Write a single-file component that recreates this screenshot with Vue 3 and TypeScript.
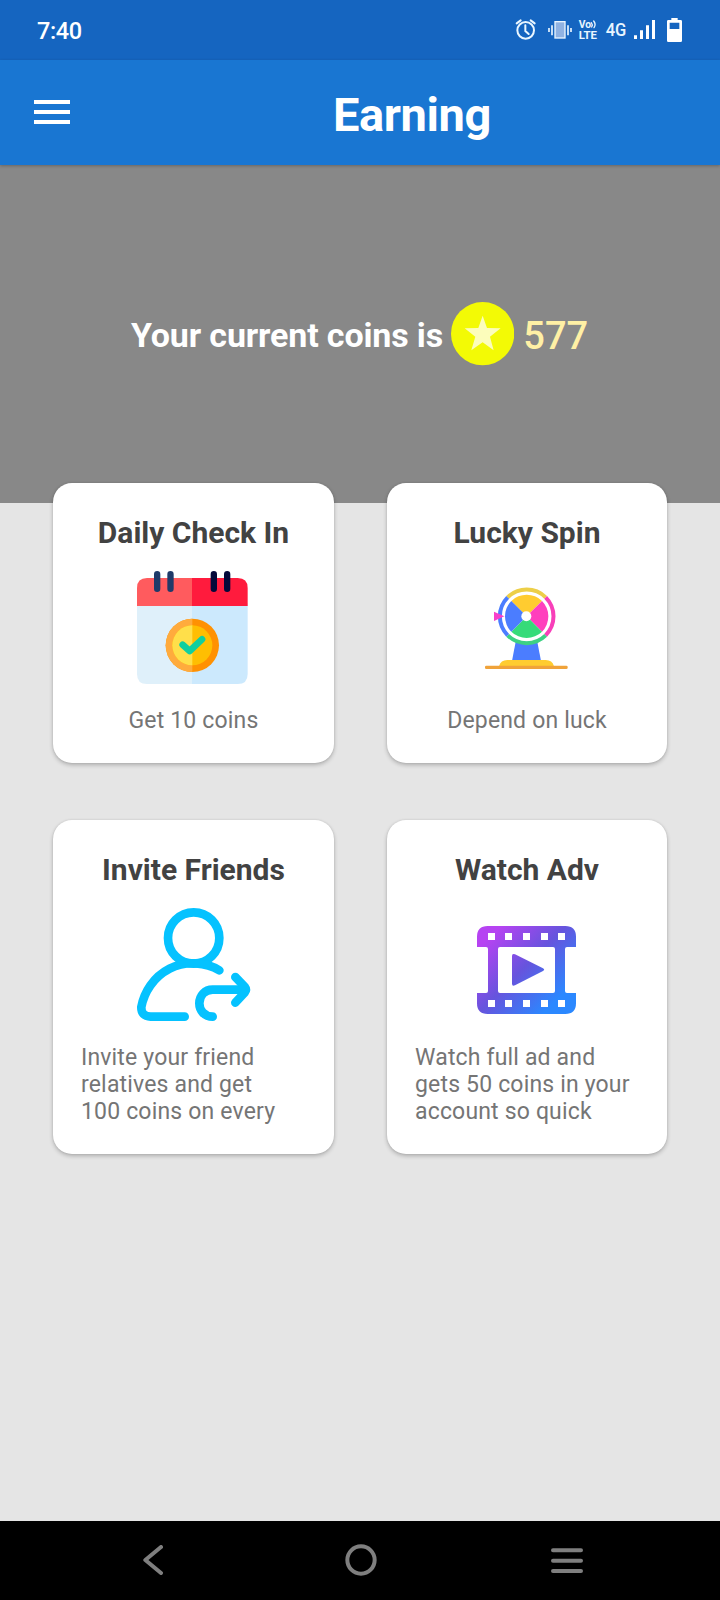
<script setup lang="ts">
interface Offer {
  id: 'checkin' | 'spin' | 'invite' | 'watch'
  title: string
  lines: string[]
}

const time = '7:40'
const coins = 577

const offers: Offer[] = [
  { id: 'checkin', title: 'Daily Check In', lines: ['Get 10 coins'] },
  { id: 'spin', title: 'Lucky Spin', lines: ['Depend on luck'] },
  { id: 'invite', title: 'Invite Friends', lines: ['Invite your friend', 'relatives and get', '100 coins on every'] },
  { id: 'watch', title: 'Watch Adv', lines: ['Watch full ad and', 'gets 50 coins in your', 'account so quick'] },
]
</script>

<template>
  <div class="screen">
    <div class="status">
      <span class="time">{{ time }}</span>
      <svg class="status-icons" viewBox="0 0 600 180">
        <g fill="none" stroke="#e9f6ff" stroke-width="6" stroke-linecap="round">
          <circle cx="77" cy="91" r="25" />
          <path d="M76 76V93L86 102M50 70L62 61M92 61L104 70" />
          <path d="M147 84V96M156 76V106M204 76V106M213 84V96" stroke-width="5" stroke-linecap="butt" />
          <rect x="165" y="65" width="30" height="49" fill="#8fb2e2" stroke-width="4" />
          <path d="M274 68Q279 74 275 81M281 63Q289 73 282 83" stroke-width="4" />
        </g>
        <g fill="#e9f6ff">
          <text x="236" y="85" class="volte" textLength="37" lengthAdjust="spacingAndGlyphs">Vo</text>
          <text x="236" y="117" class="volte" textLength="55" lengthAdjust="spacingAndGlyphs">LTE</text>
          <text x="317" y="109" class="net" textLength="62" lengthAdjust="spacingAndGlyphs">4G</text>
        </g>
        <path fill="#fff" d="M402 106h9v11h-9zM420 91h9v26h-9zM438 76h9v41h-9zM456 60h9v57h-9z" />
        <path
          fill="#fff"
          fill-rule="evenodd"
          d="M514 54h19v6h9q4 0 4 4v58q0 4-4 4h-37q-4 0-4-4V64q0-4 4-4h9zM509 68v19h29V68z"
        />
      </svg>
    </div>

    <header class="appbar">
      <svg class="menu" viewBox="0 0 108 72">
        <path fill="#fff" d="M0 0h108v12H0zM0 30h108v12H0zM0 60h108v12H0z" />
      </svg>
      <h1>Earning</h1>
    </header>

    <section class="hero">
      <span class="label">Your current coins is</span>
      <svg class="coin" viewBox="0 0 190 190">
        <circle cx="95" cy="95" r="95" fill="#f3fa05" />
        <path
          fill="#fcfdbb"
          d="M95 41L108 78L149 79L117 104L128 145L95 121L61 145L73 104L41 79L82 78Z"
        />
      </svg>
      <span class="amount">{{ coins }}</span>
    </section>

    <main class="grid">
      <article v-for="o in offers" :key="o.id" class="card">
        <h2>{{ o.title }}</h2>

        <svg v-if="o.id === 'checkin'" class="icon" viewBox="282 294 360 360">
          <path fill="#dff0fa" d="M291 400H457V642H321Q291 642 291 612Z" />
          <path fill="#cce9fd" d="M456 400H623V612Q623 642 593 642H456Z" />
          <path fill="#ff5b5e" d="M291 408V354Q291 324 321 324H457V408Z" />
          <path fill="#ff1b3d" d="M456 324H593Q623 324 623 354V408H456Z" />
          <g stroke-width="19" stroke-linecap="round">
            <path stroke="#1f3a69" d="M351.500 312.500V356.500M391.500 312.500V356.500" />
            <path stroke="#04093a" d="M521.500 312.500V356.500M561.500 312.500V356.500" />
          </g>
          <circle cx="457" cy="526" r="80" fill="#ff9102" />
          <path fill="#ffab3d" d="M457 446A80 80 0 0 0 457 606Z" />
          <circle cx="457" cy="526" r="60" fill="#ffbe02" />
          <path fill="#ffdf4a" d="M457 466A60 60 0 0 0 457 586Z" />
          <path
            d="M428 524L449 543L486 508"
            fill="none"
            stroke="#10cfa0"
            stroke-width="20"
            stroke-linecap="round"
            stroke-linejoin="round"
          />
        </svg>

        <svg v-else-if="o.id === 'spin'" class="icon" viewBox="291 294 360 360">
          <path fill="#4b7dff" d="M437 515H502L513 573H426Z" />
          <path fill="#ffcc30" d="M387 589Q392 570 412 570H527Q547 570 552 589Z" />
          <rect x="345" y="587" width="248" height="10" rx="4" fill="#f0a33a" />
          <g fill="none" stroke-width="12">
            <path stroke="#edcf48" d="M413 382A81 81 0 0 1 527 382" />
            <path stroke="#f83fb9" d="M527 382A81 81 0 0 1 527 496" />
            <path stroke="#3dd183" d="M527 496A81 81 0 0 1 413 496" />
            <path stroke="#4b7dff" d="M413 496A81 81 0 0 1 413 382" />
          </g>
          <path fill="#ffcc30" d="M470 439L424 393A65 65 0 0 1 516 393Z" />
          <path fill="#ff3fbd" d="M470 439L516 393A65 65 0 0 1 516 485Z" />
          <path fill="#36db79" d="M470 439L516 485A65 65 0 0 1 424 485Z" />
          <path fill="#4b7dff" d="M470 439L424 485A65 65 0 0 1 424 393Z" />
          <circle cx="469" cy="439" r="15" fill="#fff" />
          <path fill="#f83fca" d="M372 425L403 439L372 453Z" />
        </svg>

        <svg v-else-if="o.id === 'invite'" class="icon" viewBox="282 285 360 360">
          <g fill="none" stroke="#05c2ff" stroke-width="26" stroke-linecap="round" stroke-linejoin="round">
            <circle cx="461" cy="384" r="77" />
            <path d="M538 481C500 458 440 450 389 476C340 501 312 547 304 591Q303 619 332 620H434" />
            <path d="M518 620C492 620 478 600 478 580C478 557 494 539 518 539H612" />
            <path d="M586 501L614 530Q621 539 614 548L586 578" />
          </g>
        </svg>

        <svg v-else class="icon" viewBox="291 285 360 360">
          <defs>
            <linearGradient id="film" gradientUnits="userSpaceOnUse" x1="365" y1="375" x2="560" y2="570">
              <stop offset="0" stop-color="#b643f2" />
              <stop offset=".5" stop-color="#6654dd" />
              <stop offset="1" stop-color="#2b88ff" />
            </linearGradient>
          </defs>
          <path
            fill="url(#film)"
            fill-rule="evenodd"
            d="M321 411V380Q321 348 353 348H586Q618 348 618 380V411H591Q585 411 585 417V543Q585 549 591 549H618V580Q618 612 586 612H353Q321 612 321 580V549H348Q354 549 354 543V417Q354 411 348 411ZM390 411Q384 411 384 417V543Q384 549 390 549H549Q555 549 555 543V417Q555 411 549 411Z"
          />
          <path fill="url(#film)" d="M426 438Q426 429 435 433L519 475Q526 479 519 483L435 526Q426 530 426 521Z" />
          <path
            fill="#fff"
            d="M354 369h21v21h-21zM405 369h21v21h-21zM459 369h21v21h-21zM513 369h21v21h-21zM564 369h21v21h-21zM354 570h21v21h-21zM405 570h21v21h-21zM459 570h21v21h-21zM513 570h21v21h-21zM564 570h21v21h-21z"
          />
        </svg>

        <p :class="{ wide: o.lines.length > 1 }">
          <span v-for="line in o.lines" :key="line">{{ line }}</span>
        </p>
      </article>
    </main>

    <nav class="navbar">
      <svg viewBox="0 0 60 90"><path d="M54 6L7 45L54 84" /></svg>
      <svg viewBox="0 0 96 96"><circle cx="48" cy="48" r="41" /></svg>
      <svg viewBox="0 0 96 78"><path d="M6 7H90M6 38H90M6 69H90" /></svg>
    </nav>
  </div>
</template>

<style>
body {
  margin: 0;
  background: #e5e5e5;
}
</style>

<style scoped>
.screen {
  display: flex;
  flex-direction: column;
  width: 720px;
  height: 1600px;
  overflow: hidden;
  background: #e5e5e5;
  font-family: Roboto, "Liberation Sans", sans-serif;
}

svg {
  display: block;
  flex: none;
}

h1,
h2,
p {
  margin: 0;
}

.status {
  display: flex;
  justify-content: space-between;
  height: 60px;
  padding: 0 20px 0 37px;
  background: #1565c0;
  color: #fff;
}

.time {
  font-size: 23.500px;
  font-weight: 500;
  line-height: 62px;
  letter-spacing: -0.4px;
}

.status-icons {
  width: 200px;
  height: 60px;
}

.volte {
  font-size: 31px;
  font-weight: 700;
}

.net {
  font-size: 55px;
  font-weight: 500;
}

.appbar {
  position: relative;
  display: flex;
  align-items: center;
  height: 105px;
  padding-left: 34px;
  background: #1976d2;
  box-shadow: 0 1px 3px rgba(0, 0, 0, 0.25);
}

.menu {
  width: 36px;
  height: 24px;
  margin-bottom: 2px;
}

h1 {
  margin-left: 263px;
  padding-top: 4px;
  color: #fff;
  font-size: 47px;
  font-weight: 700;
  letter-spacing: -0.4px;
}

.hero {
  display: flex;
  align-items: center;
  height: 338px;
  padding-left: 131px;
  background: #888;
}

.label {
  width: 320px;
  padding-top: 2px;
  color: #fff;
  font-size: 34px;
  font-weight: 700;
  letter-spacing: -0.150px;
  white-space: nowrap;
}

.coin {
  width: 63.300px;
  height: 63.300px;
}

.amount {
  margin-left: 9px;
  padding-top: 4px;
  color: #fff0a5;
  font-size: 38px;
  font-weight: 500;
}

.grid {
  position: relative;
  display: grid;
  grid-template-columns: 281px 280px;
  column-gap: 53px;
  row-gap: 57px;
  margin: -20px 0 0 53px;
}

.card {
  display: flex;
  flex-direction: column;
  align-items: center;
  padding: 32px 0 29px;
  border-radius: 19px;
  background: #fff;
  box-shadow: 0 2px 4px rgba(0, 0, 0, 0.24), 0 0 2px rgba(0, 0, 0, 0.1);
}

h2 {
  color: #424242;
  font-size: 30px;
  font-weight: 700;
  line-height: 36px;
}

.icon {
  width: 120px;
  height: 120px;
  margin: 17px 0 19px;
}

p {
  color: #757575;
  font-size: 23px;
  line-height: 27px;
  letter-spacing: 0.170px;
}

p.wide {
  align-self: stretch;
  padding-left: 28px;
}

p span {
  display: block;
  white-space: nowrap;
}

.navbar {
  display: flex;
  align-items: center;
  height: 79px;
  margin-top: auto;
  padding: 0 0 1px 143px;
  box-sizing: border-box;
  background: #000;
}

.navbar svg {
  fill: none;
  stroke: #7f7f7f;
  stroke-width: 12;
  stroke-linecap: round;
  stroke-linejoin: round;
}

.navbar svg:nth-child(1) {
  width: 20px;
  height: 30px;
}

.navbar svg:nth-child(2) {
  width: 32px;
  height: 32px;
  margin-left: 181.500px;
}

.navbar svg:nth-child(3) {
  width: 32px;
  height: 26px;
  margin: 2px 0 0 174.500px;
}
</style>
